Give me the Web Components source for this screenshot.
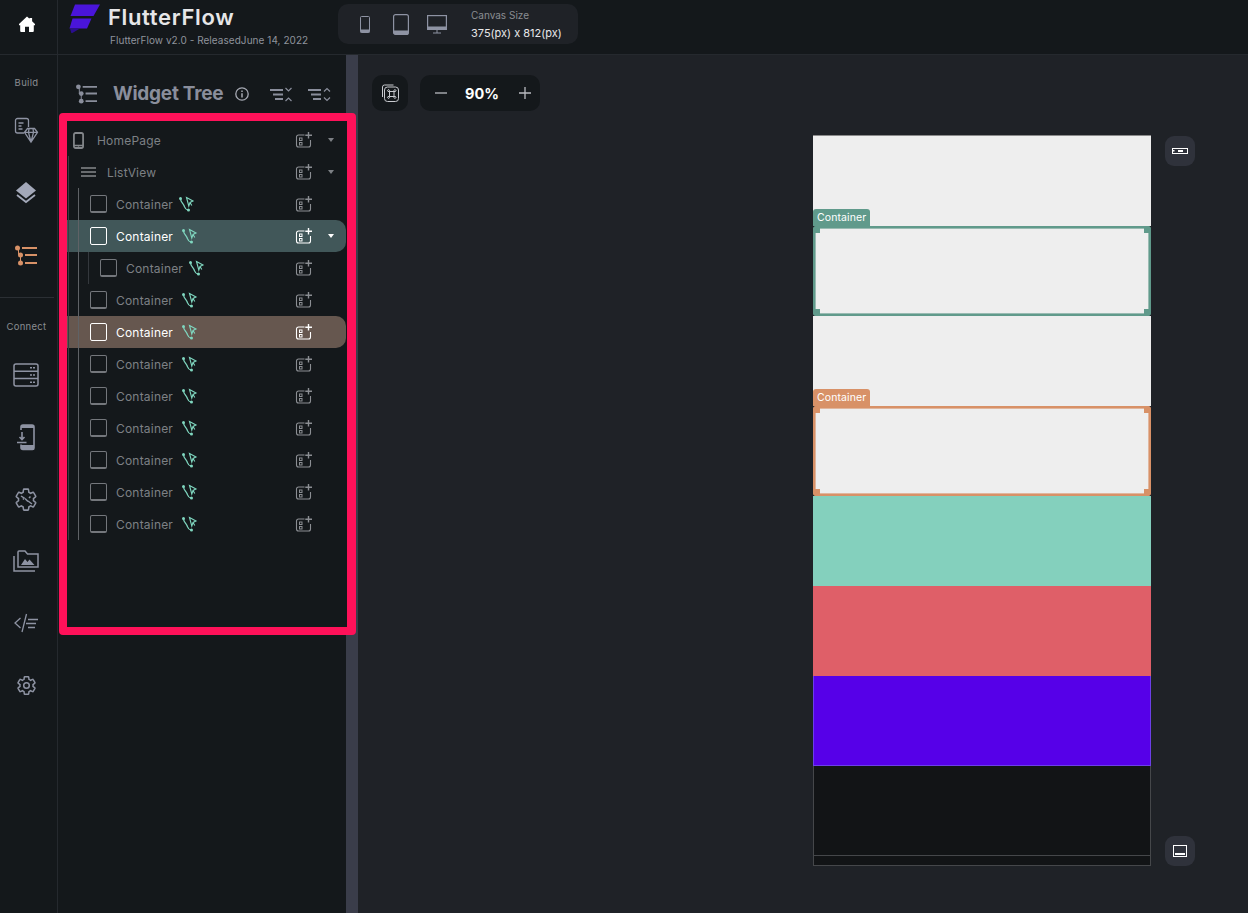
<!DOCTYPE html>
<html>
<head>
<meta charset="utf-8">
<title>FlutterFlow</title>
<style>
    html, body { margin: 0; height: 100%; background: #1f2227; overflow: hidden; }
    body { font-family: "Inter", "Liberation Sans", sans-serif; }
</style>
</head>
<body>
<ff-app></ff-app>

<script>
const GEAR = "M19.43 12.98c.04-.32.07-.64.07-.98 0-.34-.03-.66-.07-.98l2.11-1.65c.19-.15.24-.42.12-.64l-2-3.46c-.12-.22-.39-.3-.61-.22l-2.49 1c-.52-.4-1.08-.73-1.69-.98l-.38-2.65C14.46 2.18 14.25 2 14 2h-4c-.25 0-.46.18-.49.42l-.38 2.65c-.61.25-1.17.59-1.69.98l-2.49-1c-.23-.09-.49 0-.61.22l-2 3.46c-.13.22-.07.49.12.64l2.11 1.65c-.04.32-.07.65-.07.98 0 .33.03.66.07.98l-2.11 1.65c-.19.15-.24.42-.12.64l2 3.46c.12.22.39.3.61.22l2.49-1c.52.4 1.08.73 1.69.98l.38 2.65c.03.24.24.42.49.42h4c.25 0 .46-.18.49-.42l.38-2.65c.61-.25 1.17-.59 1.69-.98l2.49 1c.23.09.49 0 .61-.22l2-3.46c.12-.22.07-.49-.12-.64l-2.11-1.65z"

// every icon: viewBox size + inner svg, drawn with currentColor
const ICONS = {
    home: [16, 16, `<path fill="currentColor" stroke="none" d="M8 .5 10.5 2.8V2h2.6v3.2L16 8v1.2h-1.2V15a1 1 0 0 1-1 1H10v-5.2H6V16H2.2a1 1 0 0 1-1-1V9.2H0V8z"/>`],
    build: [23, 26, `<path stroke-width="1.3" d="M9 15H2.5a2 2 0 0 1-2-2V2.5a2 2 0 0 1 2-2h9a2 2 0 0 1 2 2V9"/><path stroke-width="1.3" d="M3.5 5h5M3.5 8h3M3.5 11h4"/><path stroke-width="1.3" d="M12.5 10.5h7l3 3.8-6.5 9.7-6.5-9.7zM9.5 14.3h13M13.5 14.3l2.5 9.7 2.500-9.7M14 10.500l-.5 3.800M18 10.500l.5 3.800"/>`],
    layers: [20, 22, `<path fill="currentColor" stroke="none" d="M10 0 20 8.500 10 16.500 0 8.500z"/><path stroke-width="1.800" d="M1 13 10 20 19 13"/>`],
    tree: [22, 21, `<g fill="currentColor" stroke="none"><circle cx="2.500" cy="3" r="2.500"/><circle cx="5.500" cy="10" r="2.500"/><circle cx="5.500" cy="18" r="2.500"/></g><path stroke-width="2" d="M7 3H22M10 10H22M10 18H22"/><path stroke-width="1" d="M3.500 4V10M5.500 11V17"/>`],
    db: [26, 24, `<rect x="1" y="1" width="24" height="22" rx="2" stroke-width="1.500"/><path stroke-width="1.500" d="M1 8.300H25M1 15.600H25"/><path stroke-width="1.600" stroke-dasharray="2 1" d="M17 4.700h5M17 12h5M17 19.300h5"/>`],
    phoneDown: [18, 26, `<path stroke-width="1.600" d="M4 6V3a2 2 0 0 1 2-2h9a2 2 0 0 1 2 2v21a1.500 1.500 0 0 1-1.500 1.500H6a2 2 0 0 1-2-2v-3"/><path fill="currentColor" stroke="none" d="M4 1h13v3H4zM4 21h13v4.500H5.500L4 24z"/><path stroke-width="1.600" d="M5 8v7M2.500 13 5 15.500 7.500 13M0 18.500H9.500"/>`],
    puzzle: [24, 25, `<g transform="scale(1 1.050)"><path stroke-width="1.500" d="${GEAR}"/></g><path stroke-width="1.500" d="M7 9l3 2-1 1.500M11 11.500l3 3M14 14l4 3M15 11l1.500-1.500"/>`],
    folder: [26, 22, `<path stroke-width="1.500" d="M1 6V21H22"/><path stroke-width="1.500" d="M5 17V2a1 1 0 0 1 1-1h6l2.500 3H25V17z"/><path fill="currentColor" stroke="none" d="M8 15l4-6 2.500 3 2-2.500 5 5.500z"/>`],
    code: [24, 20, `<path stroke-width="1.300" d="M6.500 5 1 10l5.500 5M12.500 1 8 19"/><path stroke-width="1.600" d="M14 6.500h10M12 10.500h10M14 14.500h7"/>`],
    gear: [24, 24, `<path stroke-width="1.700" d="${GEAR}"/><circle cx="12" cy="12" r="3.200" stroke-width="1.700"/>`],
    info: [14, 14, `<circle cx="7" cy="7" r="6.200" stroke-width="1.300"/><path stroke-width="1.500" d="M7 6.200V10.500M7 3.400V4.900"/>`],
    collapse: [22, 15, `<path stroke-width="1.800" d="M0 3H13M3 7.500H13M5 12H13"/><path stroke-width="1.200" d="M15.500 1 18.500 4 21.500 1M15.500 14 18.500 11 21.500 14"/>`],
    expand: [23, 15, `<path stroke-width="1.800" d="M0 3H13M3 7.500H13M5 12H13"/><path stroke-width="1.200" d="M16 4.500 19 1.500 22 4.500M16 10.500 19 13.500 22 10.500"/>`],
    phone: [12, 17, `<rect x="1" y="1" width="10" height="15" rx="1.800" stroke-width="1.900"/><path stroke-width="1.500" d="M1 13.500H11"/><circle cx="6" cy="15" r=".8" fill="currentColor" stroke="none"/>`],
    list: [15, 10, `<path stroke-width="1.300" d="M0 1H15M0 5H15M0 9H15"/>`],
    add: [16, 15, `<path stroke-width="1.100" d="M8.500 3H2.500a2 2 0 0 0-2 2v8a2 2 0 0 0 2 2H12.500a2 2 0 0 0 2-2V8"/><rect x="3.500" y="6" width="2.500" height="2.500" stroke-width="1"/><rect x="3.500" y="10.500" width="2.500" height="2.500" stroke-width="1"/><path stroke-width="1.400" d="M12.500 0V6.500M9.300 3.200H16"/>`],
    branch: [15, 16, `<path stroke-width="1.300" d="M1.500 2.500C1.500 6 4 7 5 9.500S6 13.500 9 14"/><circle cx="1.500" cy="2.500" r="1.500" fill="currentColor" stroke="none"/><circle cx="9.500" cy="14" r="1.500" fill="currentColor" stroke="none"/><path stroke-width="1.100" d="M7.500 1.500 14 5 11 6.500 9.800 10zM11.300 7 12.800 9.500"/>`],
    canvasPhone: [10, 17, `<rect x=".5" y=".5" width="9" height="16" rx="1" stroke-width="1"/><rect x=".5" y="13.500" width="9" height="3" fill="currentColor" stroke="none"/>`],
    canvasTablet: [16, 21, `<rect x=".6" y=".6" width="14.800" height="19.800" rx="2" stroke-width="1.200"/><path fill="currentColor" stroke="none" d="M.6 16.500h14.800V19a1.500 1.500 0 0 1-1.500 1.500H2A1.500 1.500 0 0 1 .6 19z"/>`],
    canvasDesktop: [20, 19, `<rect x=".6" y=".6" width="18.800" height="13.800" stroke-width="1.200"/><rect x=".6" y="11.500" width="18.800" height="3" fill="currentColor" stroke="none"/><path stroke-width="1" d="M10 14.500V18M6 18H14"/>`],
    shortcut: [18, 18, `<path stroke-width="1" d="M1.500 13V3a2 2 0 0 1 2-2h9"/><rect x="3.500" y="3" width="14" height="14.500" rx="3" stroke-width="1"/><path stroke-width="1" d="M8.500 7.500h4.500v5H8.500zM8.500 7.500H7a1 1 0 1 1 1.500-1.200zM13 7.500h1.500A1 1 0 1 0 13 6.300zM8.500 12.500H7a1 1 0 1 0 1.500 1.200zM13 12.500h1.500a1 1 0 1 1-1.500 1.200z"/>`],
    minus: [12, 2, `<path stroke-width="1.300" d="M0 1H12"/>`],
    plus: [12, 12, `<path stroke-width="1.300" d="M0 6H12M6 0V12"/>`],
    sideTop: [16, 6, `<rect x=".5" y=".5" width="15" height="5" stroke-width="1"/><rect x="6" y="2" width="5" height="2" fill="currentColor" stroke="none"/><rect x="1" y="2" width="1.500" height="1.500" fill="currentColor" stroke="none"/>`],
    sideBottom: [14, 12, `<rect x=".5" y=".5" width="13" height="11" stroke-width="1"/><rect x="2" y="8" width="10" height="2" fill="currentColor" stroke="none"/>`]
}

class FfIcon extends HTMLElement
{
    constructor(){
        super()
        const shadow = this.attachShadow({mode: "open"})
        const [w, h, body] = ICONS[this.getAttribute("name")]
        const width = this.getAttribute("w") || w
        const height = this.getAttribute("h") || h
        shadow.innerHTML = `
            <style>
                :host{ display: block; flex: none; width: ${width}px; height: ${height}px; }
                svg{ display: block; width: 100%; height: 100%; overflow: visible; fill: none; stroke: currentColor; }
            </style>
            <svg viewBox="0 0 ${w} ${h}" preserveAspectRatio="none">${body}</svg>`
    }
}
customElements.define("ff-icon", FfIcon)

//#region RAIL
const railTemplate = document.createElement("template")
railTemplate.innerHTML = /*html*/`
    <style>
        :host{
            display: flex;
            flex-direction: column;
            flex: none;
            width: 58px;
            height: 913px;
            box-sizing: border-box;
            background: #14181b;
            border-right: 1px solid #25292e;
            color: #8e93a3;
        }
        .home{
            height: 55px;
            box-sizing: border-box;
            border-bottom: 1px solid #25292e;
            display: flex;
            align-items: center;
            justify-content: center;
            color: #fff;
            padding-right: 4px;
            padding-bottom: 7px;
        }
        .label{
            font-size: 9.5px;
            line-height: 12px;
            color: #8a8d92;
            text-align: center;
            padding-right: 4px;
            letter-spacing: .3px;
        }
        .build{ margin-top: 22px; margin-bottom: 11px; }
        .item{
            height: 62px;
            display: flex;
            align-items: center;
            justify-content: center;
            padding-right: 5px;
        }
        .tree{ color: #d89167; }
        .layers{ color: #a3a8b9; }
        hr{
            margin: 11px 3px 0 0;
            border: 0;
            height: 1px;
            background: #2b2f34;
        }
        .connect{ margin-top: 23px; margin-bottom: 11px; }
    </style>
    <div class="home"><ff-icon name="home"></ff-icon></div>
    <div class="label build">Build</div>
    <div class="item"><ff-icon name="build"></ff-icon></div>
    <div class="item layers"><ff-icon name="layers"></ff-icon></div>
    <div class="item tree"><ff-icon name="tree"></ff-icon></div>
    <hr>
    <div class="label connect">Connect</div>
    <div class="item"><ff-icon name="db"></ff-icon></div>
    <div class="item"><ff-icon name="phoneDown"></ff-icon></div>
    <div class="item"><ff-icon name="puzzle"></ff-icon></div>
    <div class="item"><ff-icon name="folder"></ff-icon></div>
    <div class="item"><ff-icon name="code"></ff-icon></div>
    <div class="item"><ff-icon name="gear" w="21" h="21"></ff-icon></div>
`
class FfRail extends HTMLElement
{
    constructor(){
        super()
        this.attachShadow({mode: "open"}).append(railTemplate.content.cloneNode(true))
    }
}
customElements.define("ff-rail", FfRail)
//#endregion RAIL

//#region TOPBAR
const topbarTemplate = document.createElement("template")
topbarTemplate.innerHTML = /*html*/`
    <style>
        :host{
            display: flex;
            align-items: flex-start;
            height: 55px;
            box-sizing: border-box;
            padding-left: 11px;
            background: #14181b;
            border-bottom: 1px solid #25292e;
        }
        .logo{ flex: none; width: 32px; height: 30px; margin-top: 3px; }
        .brand{ width: 230px; flex: none; padding-top: 3px; margin-left: 7px; }
        .name{ font-size: 22px; line-height: 28px; font-weight: 600; color: #e6e6e8; letter-spacing: .65px; white-space: nowrap; }
        .sub{ font-size: 10px; line-height: 14px; margin: 2px 0 0 2px; color: #8f939b; white-space: nowrap; letter-spacing: .05px; }
        .devices{
            flex: none;
            display: flex;
            align-items: center;
            width: 240px;
            height: 40px;
            margin-top: 4px;
            box-sizing: border-box;
            padding-left: 22px;
            background: #1f2227;
            border-radius: 10px;
            color: #8e93a3;
        }
        .tablet{ margin-left: 23px; }
        .desktop{ margin-left: 18px; }
        .size{ margin-left: 24px; }
        .size div:first-child{ font-size: 10px; line-height: 14px; color: #8a8d92; }
        .size div:last-child{ font-size: 11px; line-height: 16px; margin-top: 3px; color: #e8e8ea; white-space: nowrap; }
    </style>
    <svg class="logo" viewBox="69 2 32 30">
        <path fill="#4a15da" d="M75 3.500H100L93.500 15H70.500z"/>
        <path fill="#4a15da" d="M72.500 17.500H91.500L87 27.500H69.500z"/>
        <path fill="#2a0e8e" d="M70 27.500H80L71.500 32.500z"/>
    </svg>
    <div class="brand">
        <div class="name">FlutterFlow</div>
        <div class="sub">FlutterFlow v2.0 - ReleasedJune 14, 2022</div>
    </div>
    <div class="devices">
        <ff-icon name="canvasPhone"></ff-icon>
        <ff-icon class="tablet" name="canvasTablet"></ff-icon>
        <ff-icon class="desktop" name="canvasDesktop"></ff-icon>
        <div class="size">
            <div>Canvas Size</div>
            <div>375(px) x 812(px)</div>
        </div>
    </div>
`
class FfTopbar extends HTMLElement
{
    constructor(){
        super()
        this.attachShadow({mode: "open"}).append(topbarTemplate.content.cloneNode(true))
    }
}
customElements.define("ff-topbar", FfTopbar)
//#endregion TOPBAR

//#region TREE
const GUIDE_COLORS = ["#3a3e43", "#5f6266", "#34383d"]

class FfTreeRow extends HTMLElement
{
    constructor(){
        super()
        const shadow = this.attachShadow({mode: "open"})
        const kind = this.getAttribute("kind") || "box"
        const state = this.getAttribute("state")
        const guides = Number(this.getAttribute("guides") || 0)
        const pad = this.getAttribute("pad")
        const gap = this.getAttribute("gap") || 9
        const fill = state === "green" ? "#415759" : state === "brown" ? "#66574f" : "transparent"
        const lines = GUIDE_COLORS.slice(0, guides).map((c, i) =>
            `linear-gradient(${c},${c}) ${1 + i * 10}px 0 / 1px 100% no-repeat`).join(",")

        let lead = `<span class="check"></span>`
        if(kind === "page") lead = `<ff-icon class="lead" name="phone" w="11" h="17"></ff-icon>`
        if(kind === "list") lead = `<ff-icon class="lead" name="list"></ff-icon>`

        shadow.innerHTML = /*html*/`
            <style>
                :host{
                    display: flex;
                    align-items: center;
                    height: 32px;
                    box-sizing: border-box;
                    padding-left: ${pad}px;
                    background: ${lines ? lines + "," : ""} ${fill};
                    border-radius: 0 10px 10px 0;
                    font-size: 12px;
                    letter-spacing: .2px;
                    color: ${state ? "#fff" : "#7d8085"};
                    --line: ${state ? "#fff" : "#74777c"};
                }
                .check{
                    flex: none;
                    width: 17px;
                    height: 18px;
                    box-sizing: border-box;
                    border: 1.5px solid var(--line);
                    ${state ? "" : "border-bottom-width: 2px;"}
                    border-radius: 2px;
                    margin-right: 9px;
                }
                .lead{ color: #85888c; margin-right: ${kind === "page" ? 13 : 11}px; }
                .label{ white-space: nowrap; }
                .link{ color: #7fd6bf; margin-left: ${gap}px; }
                .add{ color: ${state ? "#fff" : "#8b8e93"}; margin-left: auto; margin-top: -1px; }
                .caret{ flex: none; width: 34px; display: flex; justify-content: flex-end; padding-right: 12px; box-sizing: border-box; color: ${state ? "#fff" : "#7d8085"}; }
                .caret span{ display: ${this.hasAttribute("caret") ? "block" : "none"}; width: 0; height: 0; border: 3px solid transparent; border-top: 4px solid currentColor; border-bottom: 0; }
            </style>
            ${lead}
            <span class="label">${this.getAttribute("label")}</span>
            ${kind === "box" ? `<ff-icon class="link" name="branch"></ff-icon>` : ""}
            <ff-icon class="add" name="add"></ff-icon>
            <div class="caret"><span></span></div>`
    }
}
customElements.define("ff-tree-row", FfTreeRow)

const panelTemplate = document.createElement("template")
panelTemplate.innerHTML = /*html*/`
    <style>
        :host{
            display: block;
            flex: none;
            width: 300px;
            background: linear-gradient(to right, #14181b 288px, #3a3d4a 288px);
        }
        .head{
            display: flex;
            align-items: center;
            height: 58px;
            box-sizing: border-box;
            padding: 20px 0 0 18px;
            color: #8a8e9c;
        }
        h2{ margin: 0 0 0 16px; font-size: 19px; letter-spacing: -.25px; font-weight: 700; line-height: 36px; width: 111px; white-space: nowrap; }
        .info{ margin-left: 11px; color: #a6a9b3; }
        .collapse{ margin-left: 21px; }
        .expand{ margin-left: 16px; }
        .frame{
            height: 522px;
            margin: 0 2px 0 1px;
            box-sizing: border-box;
            padding: 3px 1px 0 0;
            border: solid #ff1159;
            border-width: 8px 9px 8px 8px;
            border-radius: 4px;
            background: #14181b;
        }
    </style>
    <div class="head">
        <ff-icon name="tree" w="21" h="20"></ff-icon>
        <h2>Widget Tree</h2>
        <ff-icon class="info" name="info"></ff-icon>
        <ff-icon class="collapse" name="collapse"></ff-icon>
        <ff-icon class="expand" name="expand"></ff-icon>
    </div>
    <div class="frame"><slot></slot></div>
`
class FfPanel extends HTMLElement
{
    constructor(){
        super()
        this.attachShadow({mode: "open"}).append(panelTemplate.content.cloneNode(true))
    }
}
customElements.define("ff-panel", FfPanel)
//#endregion TREE

//#region CANVAS
class FfBlock extends HTMLElement
{
    constructor(){
        super()
        const shadow = this.attachShadow({mode: "open"})
        const mark = this.getAttribute("mark")
        const h = mark ? `
            <div class="tag">Container</div>
            <i style="left:0;top:0;border-top-left-radius:4px"></i>
            <i style="right:0;top:0;border-top-right-radius:4px"></i>
            <i style="left:0;bottom:0;border-bottom-left-radius:4px"></i>
            <i style="right:0;bottom:0;border-bottom-right-radius:4px"></i>` : ""
        shadow.innerHTML = /*html*/`
            <style>
                :host{
                    display: block;
                    position: relative;
                    box-sizing: border-box;
                    height: ${this.getAttribute("h") || 90}px;
                    background: ${this.getAttribute("fill") || "#eeeeee"};
                    ${this.getAttribute("edge") ? `border: solid ${this.getAttribute("edge")}; border-width: ${this.getAttribute("edge-width") || "0 1px"};` : ""}
                    ${mark ? `border: 2px solid ${mark}; box-shadow: inset 0 0 0 1px ${mark}99; border-radius: 3px;` : ""}
                }
                .tag{
                    position: absolute;
                    left: -2px;
                    top: -19px;
                    width: 57px;
                    height: 17px;
                    box-sizing: border-box;
                    padding-left: 4px;
                    background: ${mark};
                    border-radius: 3px 3px 0 0;
                    color: #fff;
                    font-size: 10.5px;
                    line-height: 17px;
                    letter-spacing: .1px;
                }
                i{ position: absolute; width: 7px; height: 7px; margin: -2px; background: ${mark}; }
            </style>
            ${h}`
    }
}
customElements.define("ff-block", FfBlock)

const canvasTemplate = document.createElement("template")
canvasTemplate.innerHTML = /*html*/`
    <style>
        :host{
            display: block;
            flex: 1;
            padding: 20px 53px 0 14px;
            background: #1f2227;
            color: #fff;
        }
        .tools{ display: flex; gap: 12px; height: 36px; }
        .btn, .zoom{ background: #14181b; border-radius: 10px; display: flex; align-items: center; }
        .btn{ width: 36px; justify-content: center; color: #c9cbd0; }
        .zoom{ width: 120px; box-sizing: border-box; padding: 0 9px 0 15px; justify-content: space-between; color: #b9bbc1; }
        .zoom b{ color: #fff; font-size: 14.5px; font-weight: 700; margin-left: -2px; }
        .stage{ display: flex; justify-content: flex-end; gap: 14px; margin-top: 24px; }
        .phone{ width: 338px; height: 731px; border-top: 1px solid #8a8a8a; box-sizing: border-box; }
        .side{ display: flex; flex-direction: column; justify-content: space-between; width: 30px; padding-top: 1px; }
        .side div{ width: 30px; height: 30px; border-radius: 9px; background: #2f323b; display: flex; align-items: center; justify-content: center; }
    </style>
    <div class="tools">
        <div class="btn"><ff-icon name="shortcut"></ff-icon></div>
        <div class="zoom">
            <ff-icon name="minus"></ff-icon>
            <b>90%</b>
            <ff-icon name="plus"></ff-icon>
        </div>
    </div>
    <div class="stage">
        <div class="phone"><slot></slot></div>
        <div class="side">
            <div><ff-icon name="sideTop"></ff-icon></div>
            <div><ff-icon name="sideBottom"></ff-icon></div>
        </div>
    </div>
`
class FfCanvas extends HTMLElement
{
    constructor(){
        super()
        this.attachShadow({mode: "open"}).append(canvasTemplate.content.cloneNode(true))
    }
}
customElements.define("ff-canvas", FfCanvas)
//#endregion CANVAS

const appTemplate = document.createElement("template")
appTemplate.innerHTML = /*html*/`
    <style>
        :host{ display: flex; width: 1248px; height: 913px; overflow: hidden; }
        #main{ flex: 1; display: flex; flex-direction: column; min-width: 0; }
        #body{ flex: 1; display: flex; }
    </style>
    <ff-rail></ff-rail>
    <div id="main">
        <ff-topbar></ff-topbar>
        <div id="body">
            <ff-panel>
                <ff-tree-row kind="page" label="HomePage" pad="6" caret></ff-tree-row>
                <ff-tree-row kind="list" label="ListView" pad="14" guides="1" caret></ff-tree-row>
                <ff-tree-row label="Container" pad="23" guides="2" gap="6"></ff-tree-row>
                <ff-tree-row label="Container" pad="23" guides="2" state="green" caret></ff-tree-row>
                <ff-tree-row label="Container" pad="33" guides="3" gap="6"></ff-tree-row>
                <ff-tree-row label="Container" pad="23" guides="2"></ff-tree-row>
                <ff-tree-row label="Container" pad="23" guides="2" state="brown"></ff-tree-row>
                <ff-tree-row label="Container" pad="23" guides="2"></ff-tree-row>
                <ff-tree-row label="Container" pad="23" guides="2"></ff-tree-row>
                <ff-tree-row label="Container" pad="23" guides="2"></ff-tree-row>
                <ff-tree-row label="Container" pad="23" guides="2"></ff-tree-row>
                <ff-tree-row label="Container" pad="23" guides="2"></ff-tree-row>
                <ff-tree-row label="Container" pad="23" guides="2"></ff-tree-row>
            </ff-panel>
            <ff-canvas>
                <ff-block></ff-block>
                <ff-block mark="#609a8b"></ff-block>
                <ff-block></ff-block>
                <ff-block mark="#d89167"></ff-block>
                <ff-block fill="#84d0bd"></ff-block>
                <ff-block fill="#df5f68"></ff-block>
                <ff-block fill="#5600e8" edge="#6d3fe8" edge-width="0 1px 1px"></ff-block>
                <ff-block fill="#121416" edge="#45474a" edge-width="0 1px" h="89"></ff-block>
                <ff-block fill="#121416" edge="#45474a" edge-width="1px" h="11"></ff-block>
            </ff-canvas>
        </div>
    </div>
`
class FfApp extends HTMLElement
{
    constructor(){
        super()
        this.attachShadow({mode: "open"}).append(appTemplate.content.cloneNode(true))
    }
}
customElements.define("ff-app", FfApp)
</script>
</body>
</html>
